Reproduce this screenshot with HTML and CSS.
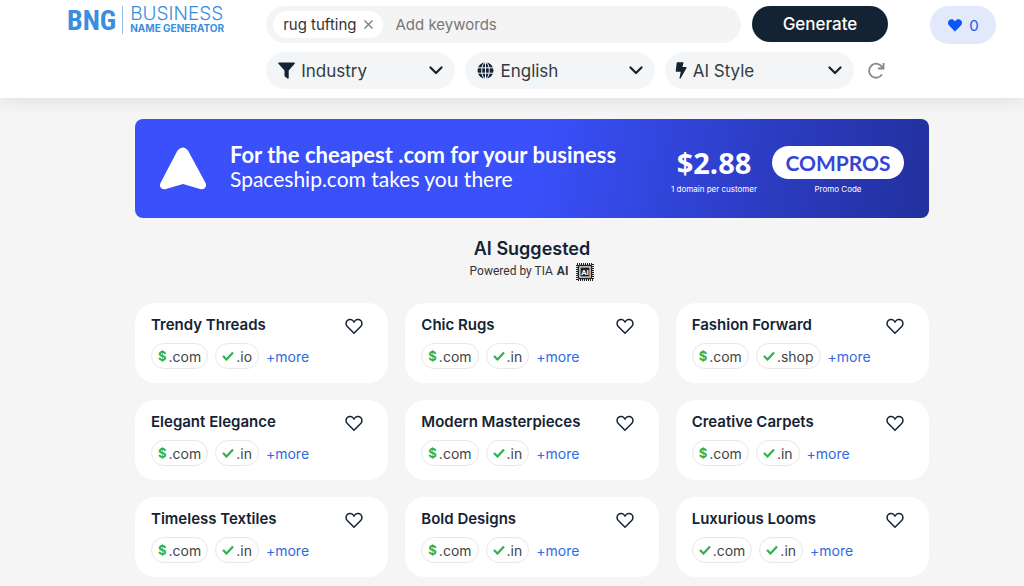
FILE: index.html
```html
<!DOCTYPE html>
<html lang="en">
<head>
    <meta charset="UTF-8">
    <meta name="viewport" content="width=device-width, initial-scale=1.0">
    <title>Business Name Generator</title>
    <link rel="stylesheet" href="styles.css">
</head>
<body>
    <!-- shared icons -->
    <svg class="sprite" aria-hidden="true">
        <symbol id="heart" viewBox="0 0 18 17"><path d="M9 15.3 2.3 8.5C.6 6.700.7 4 2.300 2.500c1.800-1.700 4.500-1.300 5.800.4L9 4l.9-1.100c1.300-1.700 4-2.100 5.800-.4 1.600 1.500 1.700 4.200 0 6z"/></symbol>
        <symbol id="check" viewBox="0 0 12 10"><path d="M1 5l3.500 3.500L11 1.500" fill="none" stroke="#2fb14c" stroke-width="2.200"/></symbol>
        <symbol id="down" viewBox="0 0 14 9"><path d="M1.500 1.500 7 7l5.500-5.500" fill="none" stroke="#142333" stroke-width="2.200" stroke-linecap="round" stroke-linejoin="round"/></symbol>
    </svg>
    <header class="header">
        <a class="logo" href="#">
            <span class="logo-short">BNG</span>
            <span class="logo-full"><span class="logo-top">BUSINESS</span><span class="logo-bottom">NAME GENERATOR</span></span>
        </a>
        <form class="search">
            <div class="search-row">
                <div class="keywords">
                    <span class="tag">rug tufting
                        <button class="tag-close" type="button" aria-label="Remove rug tufting"><svg width="9" height="9" viewBox="0 0 9 9"><path d="M.5.5l8 8M8.500.5l-8 8" stroke="#777" stroke-width="1.200"/></svg></button>
                    </span>
                    <input type="text" placeholder="Add keywords" aria-label="Add keywords">
                </div>
                <button class="generate" type="button">Generate</button>
            </div>
            <div class="filters">
                <label class="filter">
                    <svg width="17" height="17" viewBox="0 0 17 17"><path d="M1 .5h15c.9 0 1.100.7.7 1.300L10.700 8.500V16c0 .8-.6 1-1.200.6l-2.600-2.200a1 1 0 0 1-.4-.8V8.500L.4 1.800C-.1 1.200.1.500 1 .5z" fill="#142333"/></svg>
                    <select aria-label="Industry"><option>Industry</option></select>
                    <svg class="arrow" width="14" height="9"><use href="#down"/></svg>
                </label>
                <label class="filter">
                    <svg width="17" height="17" viewBox="0 0 17 17"><circle cx="8.500" cy="8.500" r="8" fill="#142333"/><g fill="none" stroke="#f3f5f6"><ellipse cx="8.500" cy="8.500" rx="3.800" ry="8"/><path d="M8.500 0v17M0 5.800h17M0 11.200h17"/></g></svg>
                    <select aria-label="Language"><option>English</option></select>
                    <svg class="arrow" width="14" height="9"><use href="#down"/></svg>
                </label>
                <label class="filter filter-style">
                    <svg width="12" height="17" viewBox="0 0 12 17"><path d="M2.500.3h6L7.500 5H11c.6 0 .8.5.5 1L5.500 16.500c-.5.6-1.200.3-1-.4L5.700 9.800H1.500c-.6 0-.9-.3-.8-.9L1.700 1c.1-.5.300-.7.800-.7z" fill="#142333"/></svg>
                    <select aria-label="AI Style"><option>AI Style</option></select>
                    <svg class="arrow" width="14" height="9"><use href="#down"/></svg>
                </label>
                <button class="reset" type="button" aria-label="Reset"><svg width="17" height="17" viewBox="0 0 17 17" fill="none" stroke="#888" stroke-width="1.800"><path d="M14 12.500A7 7 0 1 1 14.300 5.500M15.500 1v5.500H10"/></svg></button>
            </div>
        </form>
        <button class="saved" type="button" aria-label="Saved names"><svg width="16" height="15"><use href="#heart"/></svg>0</button>
    </header>

    <main class="main">
        <a class="banner" href="#">
            <svg class="ship" width="48" height="44" viewBox="0 0 48 44"><path d="M18.500 3.500Q24-2.500 29 3.500L46 35c3 5-1 8-5 7L24 37 7 42c-4 1-8-2-5-7z" fill="#fff"/></svg>
            <span class="banner-text"><strong>For the cheapest .com for your business</strong><span>Spaceship.com takes you there</span></span>
            <span class="offer"><strong class="price">$2.88</strong><small>1 domain per customer</small></span>
            <span class="offer"><strong class="code">COMPROS</strong><small>Promo Code</small></span>
        </a>

        <h1>AI Suggested</h1>
        <p class="powered">Powered by TIA <b>AI</b>
            <svg width="18" height="18" viewBox="0 0 18 18"><rect x="1" y="1" width="16" height="16" fill="none" stroke="#222" stroke-width="2" stroke-dasharray="1 1"/><rect x="2.500" y="2.500" width="13" height="13" rx="1" fill="#eee" stroke="#222" stroke-width="1.500"/><rect x="4.500" y="4.500" width="9" height="9" fill="#222"/><text x="9" y="12" text-anchor="middle" class="chip-text">AI</text></svg>
        </p>

        <section class="cards">
            <article class="card">
                <div class="card-head"><h2>Trendy Threads</h2><button class="like" type="button" aria-label="Save Trendy Threads"><svg width="18" height="17"><use href="#heart"/></svg></button></div>
                <div class="domains"><a class="domain" href="#"><b>$</b>.com</a><a class="domain" href="#"><svg width="12" height="10"><use href="#check"/></svg>.io</a><a class="more" href="#">+more</a></div>
            </article>
            <article class="card">
                <div class="card-head"><h2>Chic Rugs</h2><button class="like" type="button" aria-label="Save Chic Rugs"><svg width="18" height="17"><use href="#heart"/></svg></button></div>
                <div class="domains"><a class="domain" href="#"><b>$</b>.com</a><a class="domain" href="#"><svg width="12" height="10"><use href="#check"/></svg>.in</a><a class="more" href="#">+more</a></div>
            </article>
            <article class="card">
                <div class="card-head"><h2>Fashion Forward</h2><button class="like" type="button" aria-label="Save Fashion Forward"><svg width="18" height="17"><use href="#heart"/></svg></button></div>
                <div class="domains"><a class="domain" href="#"><b>$</b>.com</a><a class="domain" href="#"><svg width="12" height="10"><use href="#check"/></svg>.shop</a><a class="more" href="#">+more</a></div>
            </article>
            <article class="card">
                <div class="card-head"><h2>Elegant Elegance</h2><button class="like" type="button" aria-label="Save Elegant Elegance"><svg width="18" height="17"><use href="#heart"/></svg></button></div>
                <div class="domains"><a class="domain" href="#"><b>$</b>.com</a><a class="domain" href="#"><svg width="12" height="10"><use href="#check"/></svg>.in</a><a class="more" href="#">+more</a></div>
            </article>
            <article class="card">
                <div class="card-head"><h2>Modern Masterpieces</h2><button class="like" type="button" aria-label="Save Modern Masterpieces"><svg width="18" height="17"><use href="#heart"/></svg></button></div>
                <div class="domains"><a class="domain" href="#"><b>$</b>.com</a><a class="domain" href="#"><svg width="12" height="10"><use href="#check"/></svg>.in</a><a class="more" href="#">+more</a></div>
            </article>
            <article class="card">
                <div class="card-head"><h2>Creative Carpets</h2><button class="like" type="button" aria-label="Save Creative Carpets"><svg width="18" height="17"><use href="#heart"/></svg></button></div>
                <div class="domains"><a class="domain" href="#"><b>$</b>.com</a><a class="domain" href="#"><svg width="12" height="10"><use href="#check"/></svg>.in</a><a class="more" href="#">+more</a></div>
            </article>
            <article class="card">
                <div class="card-head"><h2>Timeless Textiles</h2><button class="like" type="button" aria-label="Save Timeless Textiles"><svg width="18" height="17"><use href="#heart"/></svg></button></div>
                <div class="domains"><a class="domain" href="#"><b>$</b>.com</a><a class="domain" href="#"><svg width="12" height="10"><use href="#check"/></svg>.in</a><a class="more" href="#">+more</a></div>
            </article>
            <article class="card">
                <div class="card-head"><h2>Bold Designs</h2><button class="like" type="button" aria-label="Save Bold Designs"><svg width="18" height="17"><use href="#heart"/></svg></button></div>
                <div class="domains"><a class="domain" href="#"><b>$</b>.com</a><a class="domain" href="#"><svg width="12" height="10"><use href="#check"/></svg>.in</a><a class="more" href="#">+more</a></div>
            </article>
            <article class="card">
                <div class="card-head"><h2>Luxurious Looms</h2><button class="like" type="button" aria-label="Save Luxurious Looms"><svg width="18" height="17"><use href="#heart"/></svg></button></div>
                <div class="domains"><a class="domain" href="#"><svg width="12" height="10"><use href="#check"/></svg>.com</a><a class="domain" href="#"><svg width="12" height="10"><use href="#check"/></svg>.in</a><a class="more" href="#">+more</a></div>
            </article>
        </section>
    </main>
</body>
</html>
```
FILE: styles.css
```css
*{
    margin: 0;
    padding: 0;
    box-sizing: border-box;
}
body{
    background-color: #f5f5f5;
    color: #142333;
    font-family: Inter, sans-serif;
}
a{
    text-decoration: none;
}
button, input, select{
    font-family: inherit;
    border: 0;
    background: none;
    outline: none;
}
button{
    cursor: pointer;
}
.sprite{
    display: none;
}
.header{
    display: flex;
    align-items: flex-start;
    gap: 42px;
    padding: 6px 28px 9px 67px;
    background-color: #fff;
    box-shadow: 0 0 18px rgba(0, 0, 0, 0.12);
}
.logo{
    display: flex;
    align-items: center;
    gap: 6px;
    flex: 0 0 157px;
    height: 28px;
    color: #3b8ede;
    white-space: nowrap;
}
.logo-short{
    font-family: "Roboto Condensed", "Liberation Sans", sans-serif;
    font-size: 28px;
    font-weight: 700;
}
.logo-full{
    display: flex;
    flex-direction: column;
    padding-left: 7px;
    border-left: 1px solid #8fc0ec;
}
.logo-top{
    font-size: 19px;
    font-weight: 300;
    line-height: 16px;
}
.logo-bottom{
    font-size: 10px;
    font-weight: 700;
    line-height: 12px;
}
.search{
    flex: 1;
    display: flex;
    flex-direction: column;
    gap: 9px;
}
.search-row{
    display: flex;
    gap: 11px;
}
.keywords{
    flex: 1;
    display: flex;
    align-items: center;
    gap: 13px;
    height: 37px;
    padding: 0 7px;
    border-radius: 19px;
    background-color: #f4f4f4;
}
.tag{
    display: flex;
    align-items: center;
    gap: 7px;
    height: 27px;
    padding: 0 10px;
    border-radius: 14px;
    background-color: #fff;
    color: #333;
    font-size: 15px;
    white-space: nowrap;
}
.tag-close{
    display: flex;
}
.keywords input{
    flex: 1;
    min-width: 0;
    font-size: 15px;
}
.keywords input::placeholder{
    color: #777;
}
.generate{
    width: 136px;
    height: 36px;
    border-radius: 18px;
    background-color: #142333;
    color: #fff;
    font-size: 17px;
    font-weight: 500;
}
.filters{
    display: grid;
    grid-template-columns: repeat(3, 1fr) 24px;
    gap: 10px;
}
.filter{
    display: flex;
    align-items: center;
    gap: 6px;
    height: 37px;
    padding: 0 12px;
    border-radius: 19px;
    background-color: #f3f5f6;
}
.filter-style{
    padding-left: 10px;
}
.filter select{
    flex: 1;
    min-width: 0;
    appearance: none;
    color: #333b42;
    font-size: 17px;
}
.reset{
    display: flex;
    align-items: center;
    justify-content: center;
}
.saved{
    display: flex;
    align-items: center;
    justify-content: center;
    gap: 6px;
    width: 66px;
    height: 38px;
    border-radius: 19px;
    background-color: #e1e9fb;
    color: #1d5ce6;
    font-size: 15px;
}
.saved svg{
    fill: #0b57f5;
}
.main{
    padding: 21px 95px 10px 135px;
}
.banner{
    display: flex;
    align-items: center;
    height: 99px;
    padding: 0 25px 0 24px;
    border-radius: 8px;
    background: linear-gradient(100deg, #3a50fa 50%, #2c3dc4 78%, #22309d);
    color: #fff;
    font-family: Lato, sans-serif;
}
.banner-text{
    flex: 1;
    display: flex;
    flex-direction: column;
    padding: 0 0 4px 23px;
    font-size: 21px;
    line-height: 24px;
}
.banner-text strong{
    font-size: 22px;
}
.offer{
    display: flex;
    flex-direction: column;
    align-items: center;
    gap: 4px;
    padding-top: 4px;
    margin-left: 15px;
}
.offer small{
    font-family: Inter, sans-serif;
    font-size: 8px;
    line-height: 12px;
}
.price{
    font-family: "Open Sans", sans-serif;
    font-size: 29px;
    line-height: 33px;
}
.code{
    width: 132px;
    border-radius: 17px;
    background-color: #fff;
    color: #3546d4;
    font-size: 21px;
    line-height: 33px;
    text-align: center;
}
h1{
    margin-top: 19px;
    font-size: 18px;
    font-weight: 600;
    line-height: 24px;
    text-align: center;
}
.powered{
    display: flex;
    align-items: center;
    justify-content: center;
    gap: 4px;
    margin-bottom: 21px;
    color: #333;
    font-family: Roboto, sans-serif;
    font-size: 12px;
    line-height: 21px;
}
.chip-text{
    fill: #fff;
    font-size: 8px;
    font-weight: bold;
}
.powered svg{
    margin-left: 4px;
}
.cards{
    display: grid;
    grid-template-columns: repeat(3, 1fr);
    gap: 17px;
}
.card{
    padding: 11px 16px 14px;
    border-radius: 20px;
    background-color: #fff;
}
.card-head{
    display: flex;
    align-items: flex-end;
    justify-content: space-between;
    padding-right: 9px;
    margin-bottom: 8px;
}
.card h2{
    font-size: 15px;
    font-weight: 600;
    line-height: 21px;
}
.like{
    display: flex;
}
.like svg{
    fill: none;
    stroke: #142333;
    stroke-width: 1.5;
}
.domains{
    display: flex;
    align-items: center;
    gap: 7px;
    font-size: 14px;
}
.domain{
    display: flex;
    align-items: center;
    gap: 2px;
    height: 26px;
    padding: 0 6px;
    border: 1px solid #e8e8e8;
    border-radius: 13px;
    color: #444;
}
.domain b{
    color: #2fb14c;
    font-size: 13px;
}
.more{
    color: #2f6be0;
}
```
